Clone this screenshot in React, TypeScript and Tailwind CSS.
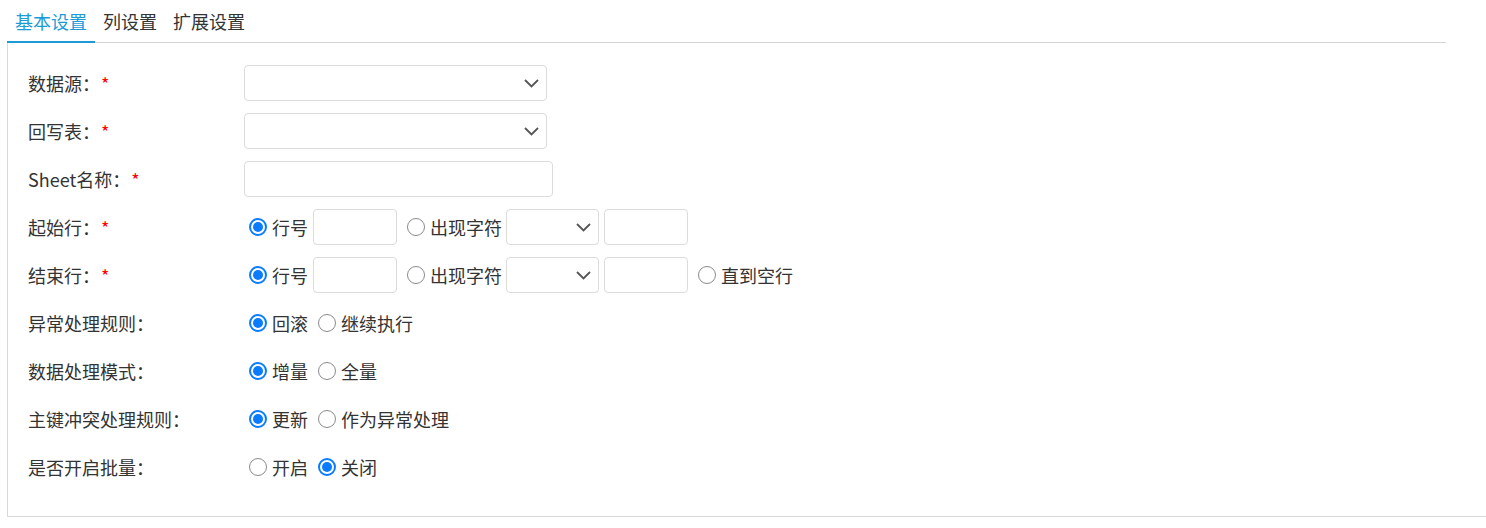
import type { ReactNode } from "react";

const FONT = { fontFamily: '"Noto Sans CJK SC", "Noto Sans", sans-serif' };

function Chevron() {
  return (
    <svg width="15" height="9" viewBox="0 0 15 9" fill="none" className="shrink-0">
      <polyline points="1,1 7.5,7.5 14,1" stroke="#555" strokeWidth="1.8" />
    </svg>
  );
}

function Select({ w }: { w: string }) {
  return (
    <div className={`${w} h-9 rounded-[4px] border border-[#dcdcdc] bg-white flex items-center justify-end pr-[7px]`}>
      <Chevron />
    </div>
  );
}

function TextBox({ w }: { w: string }) {
  return <input type="text" className={`${w} h-9 rounded-[4px] border border-[#dcdcdc] bg-white outline-none px-2`} />;
}

function Radio({ label, checked }: { label: string; checked?: boolean }) {
  return (
    <label className="flex items-center gap-[5px]">
      {checked ? (
        <span className="w-[18px] h-[18px] rounded-full border-2 border-[#0a7cff] bg-white flex items-center justify-center shrink-0">
          <span className="w-[10px] h-[10px] rounded-full bg-[#0a7cff]" />
        </span>
      ) : (
        <span className="w-[18px] h-[18px] rounded-full border-[1.5px] border-[#8a8a8a] bg-white shrink-0" />
      )}
      <span>{label}</span>
    </label>
  );
}

function Row({ label, required, children }: { label: string; required?: boolean; children: ReactNode }) {
  return (
    <div className="flex items-center h-12">
      <div className="w-[216px] shrink-0 flex items-center">
        <span>{label}</span>
        {required && <span className="text-[#ff0000] ml-[1px]">*</span>}
      </div>
      <div className="flex items-center pl-[5px]">{children}</div>
    </div>
  );
}

export default function App() {
  return (
    <div className="w-[1486px] h-[528px] bg-white text-[#333] text-[18px] leading-6" style={FONT}>
      {/* tabs */}
      <div className="ml-[7px] mr-[40px] h-[43px] flex border-b border-[#d4d4d4]">
        <div className="h-[43px] -mb-px px-2 flex items-center border-b-2 border-[#1e9ad6] text-[#1e9ad6]">基本设置</div>
        <div className="h-[42px] px-2 flex items-center">列设置</div>
        <div className="h-[42px] px-2 flex items-center">扩展设置</div>
      </div>

      {/* form */}
      <div className="ml-[7px] border-l border-b border-[#d9d9d9] pl-5 pt-4 pb-[25px]">
        <Row label="数据源：" required>
          <div className="-ml-[5px]"><Select w="w-[303px]" /></div>
        </Row>
        <Row label="回写表：" required>
          <div className="-ml-[5px]"><Select w="w-[303px]" /></div>
        </Row>
        <Row label="Sheet名称：" required>
          <div className="-ml-[5px]"><TextBox w="w-[309px]" /></div>
        </Row>
        <Row label="起始行：" required>
          <Radio label="行号" checked />
          <div className="ml-[5px]"><TextBox w="w-[84px]" /></div>
          <div className="ml-[10px]"><Radio label="出现字符" /></div>
          <div className="ml-[4px]"><Select w="w-[93px]" /></div>
          <div className="ml-[5px]"><TextBox w="w-[84px]" /></div>
        </Row>
        <Row label="结束行：" required>
          <Radio label="行号" checked />
          <div className="ml-[5px]"><TextBox w="w-[84px]" /></div>
          <div className="ml-[10px]"><Radio label="出现字符" /></div>
          <div className="ml-[4px]"><Select w="w-[93px]" /></div>
          <div className="ml-[5px]"><TextBox w="w-[84px]" /></div>
          <div className="ml-[10px]"><Radio label="直到空行" /></div>
        </Row>
        <Row label="异常处理规则：">
          <Radio label="回滚" checked />
          <div className="ml-[10px]"><Radio label="继续执行" /></div>
        </Row>
        <Row label="数据处理模式：">
          <Radio label="增量" checked />
          <div className="ml-[10px]"><Radio label="全量" /></div>
        </Row>
        <Row label="主键冲突处理规则：">
          <Radio label="更新" checked />
          <div className="ml-[10px]"><Radio label="作为异常处理" /></div>
        </Row>
        <Row label="是否开启批量：">
          <Radio label="开启" />
          <div className="ml-[10px]"><Radio label="关闭" checked /></div>
        </Row>
      </div>
    </div>
  );
}
